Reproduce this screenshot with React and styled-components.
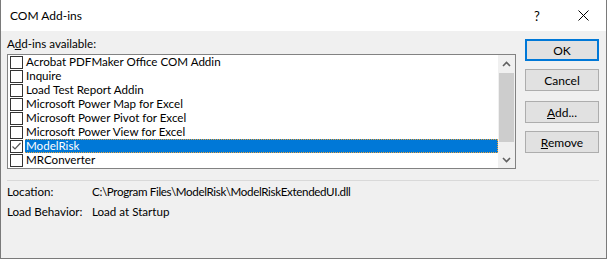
import styled, { createGlobalStyle } from "styled-components";

const GlobalStyle = createGlobalStyle`
  body {
    margin: 0;
    background: #fff;
  }
`;

const Dialog = styled.div`
  width: 607px;
  height: 259px;
  box-sizing: border-box;
  border: 1px solid #7a7a7a;
  border-top: none;
  background: #f0f0f0;
  display: flex;
  flex-direction: column;
  font-family: Lato, "Liberation Sans", sans-serif;
  font-size: 11.6px;
  color: #000;
`;

const TitleBar = styled.div`
  height: 31px;
  background: #fff;
  display: flex;
  align-items: center;
  padding-left: 9px;
  font-size: 12px;
`;

const Title = styled.div`
  flex: 1;
  line-height: 14px;
`;

const CaptionButton = styled.div`
  width: 46px;
  height: 31px;
  display: flex;
  align-items: center;
  justify-content: center;
  font-size: 13px;
`;

const Main = styled.div`
  display: flex;
  gap: 9px;
  padding: 0 7px 0 6px;
`;

const LeftCol = styled.div`
  width: 509px;
  padding-top: 6px;
`;

const Label = styled.div`
  height: 14px;
  line-height: 14px;
  margin-bottom: 3px;
`;

const ListBox = styled.div`
  height: 115px;
  box-sizing: border-box;
  border: 1px solid #828282;
  background: #fff;
  display: flex;
`;

const Rows = styled.div`
  flex: 1;
`;

const Row = styled.div`
  height: 14px;
  display: flex;
  align-items: center;
  padding-left: 2px;
`;

const Box = styled.div`
  width: 13px;
  height: 13px;
  box-sizing: border-box;
  border: 1px solid #333;
  background: #fff;
  margin-right: 2px;
  display: flex;
  align-items: center;
  justify-content: center;
`;

const RowText = styled.div`
  flex: 1;
  height: 14px;
  line-height: 12px;
  padding-left: 1px;
  box-sizing: border-box;
  white-space: nowrap;
  overflow: hidden;
  background: ${(p) => (p.$selected ? "#0078d7" : "transparent")};
  color: ${(p) => (p.$selected ? "#fff" : "#000")};
  border: 1px dotted ${(p) => (p.$selected ? "#e9a23b" : "transparent")};
  border-left: none;
`;

const ScrollBar = styled.div`
  width: 17px;
  background: #f0f0f0;
  display: flex;
  flex-direction: column;
`;

const Arrow = styled.div`
  height: 17px;
  display: flex;
  align-items: center;
  justify-content: center;
`;

const Track = styled.div`
  flex: 1;
  padding-top: 1px;
`;

const Thumb = styled.div`
  height: 69px;
  margin: 0 1px;
  background: #cdcdcd;
`;

const ButtonCol = styled.div`
  width: 74px;
  padding-top: 8px;
  display: flex;
  flex-direction: column;
`;

const Button = styled.div`
  height: 22px;
  box-sizing: border-box;
  border: ${(p) => (p.$default ? "2px solid #0078d7" : "1px solid #adadad")};
  background: #e1e1e1;
  display: flex;
  align-items: center;
  justify-content: center;
  font-size: 12px;
  margin-top: ${(p) => p.$gap || 0}px;
`;

const Separator = styled.div`
  margin: 11px 7px 0 6px;
  border-top: 1px solid #d9d9d9;
`;

const Info = styled.div`
  display: grid;
  grid-template-columns: 85px auto;
  row-gap: 6px;
  padding: 4px 0 0 6px;
  line-height: 14px;
`;

const PathValue = styled.div`
  letter-spacing: -0.35px;
`;

const items = [
  "Acrobat PDFMaker Office COM Addin",
  "Inquire",
  "Load Test Report Addin",
  "Microsoft Power Map for Excel",
  "Microsoft Power Pivot for Excel",
  "Microsoft Power View for Excel",
  "ModelRisk",
  "MRConverter",
];

const Chevron = ({ up }) => (
  <svg width="9" height="6" viewBox="0 0 9 6">
    <path
      d={up ? "M1 5 L4.5 1.5 L8 5" : "M1 1 L4.5 4.5 L8 1"}
      fill="none"
      stroke="#606060"
      strokeWidth="1.6"
    />
  </svg>
);

export default function App() {
  return (
    <>
      <GlobalStyle />
      <Dialog>
        <TitleBar>
          <Title>COM Add-ins</Title>
          <CaptionButton>?</CaptionButton>
          <CaptionButton>
            <svg width="11" height="11" viewBox="0 0 11 11">
              <path d="M0.5 0.5 L10.5 10.5 M10.5 0.5 L0.5 10.5" stroke="#000" strokeWidth="1" />
            </svg>
          </CaptionButton>
        </TitleBar>
        <Main>
          <LeftCol>
            <Label>
              A<u>d</u>d-ins available:
            </Label>
            <ListBox>
              <Rows>
                {items.map((name) => {
                  const selected = name === "ModelRisk";
                  return (
                    <Row key={name}>
                      <Box>
                        {selected && (
                          <svg width="11" height="11" viewBox="0 0 11 11">
                            <path d="M1.5 5.5 L4 8 L9.5 2" fill="none" stroke="#555" strokeWidth="1.2" />
                          </svg>
                        )}
                      </Box>
                      <RowText $selected={selected}>{name}</RowText>
                    </Row>
                  );
                })}
              </Rows>
              <ScrollBar>
                <Arrow>
                  <Chevron up />
                </Arrow>
                <Track>
                  <Thumb />
                </Track>
                <Arrow>
                  <Chevron />
                </Arrow>
              </ScrollBar>
            </ListBox>
          </LeftCol>
          <ButtonCol>
            <Button $default>OK</Button>
            <Button $gap={8}>Cancel</Button>
            <Button $gap={10}>
              <span>
                <u>A</u>dd...
              </span>
            </Button>
            <Button $gap={8}>
              <span>
                <u>R</u>emove
              </span>
            </Button>
          </ButtonCol>
        </Main>
        <Separator />
        <Info>
          <div>Location:</div>
          <PathValue>C:\Program Files\ModelRisk\ModelRiskExtendedUI.dll</PathValue>
          <div>Load Behavior:</div>
          <div>Load at Startup</div>
        </Info>
      </Dialog>
    </>
  );
}
